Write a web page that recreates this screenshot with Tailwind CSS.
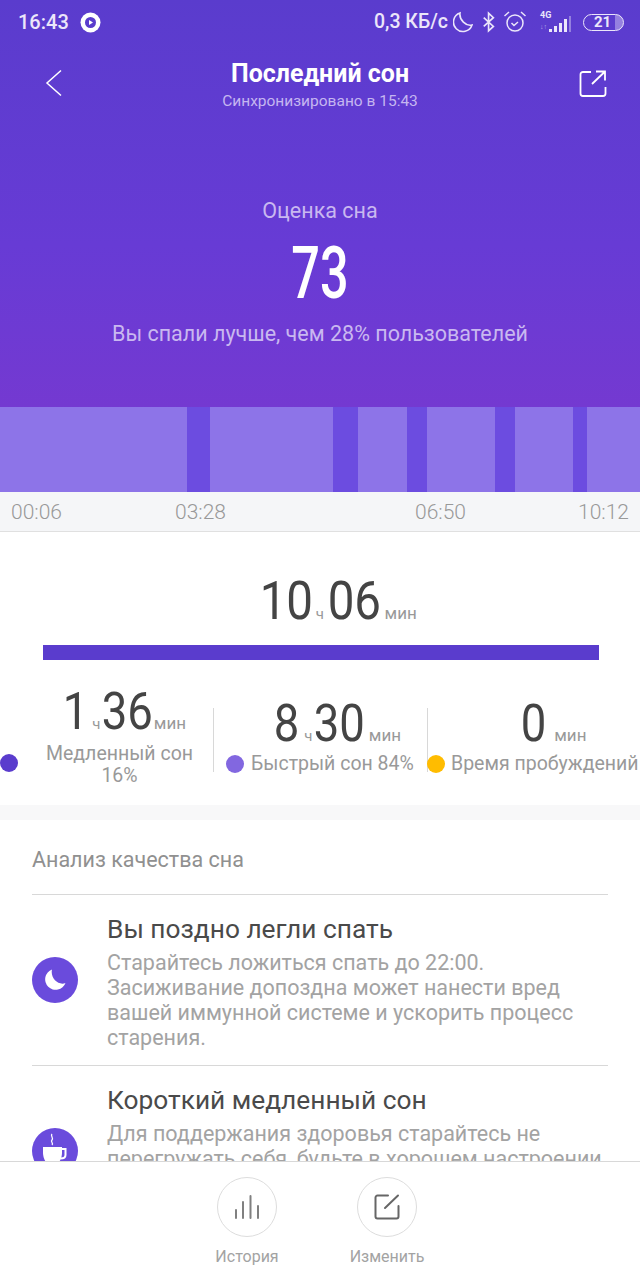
<!DOCTYPE html>
<html lang="ru">
<head>
    <meta charset="UTF-8">
    <meta name="viewport" content="width=device-width, initial-scale=1.0">
    <title>Последний сон</title>
    <script src="https://cdn.jsdelivr.net/npm/@tailwindcss/browser@4"></script>
</head>
<body class="bg-white font-['Roboto',sans-serif]">
<div class="w-[640px] h-[1280px] overflow-hidden flex flex-col">
    <div class="flex-1 min-h-0 overflow-hidden">
        <!-- header -->
        <div class="h-[407px] bg-gradient-to-b from-[#5a3ccd] via-[#673bd5] via-60% to-[#7439d1] flex flex-col text-white">
            <!-- status bar -->
            <div class="h-[44px] flex items-center pl-[18px] text-[#ebe6fa] font-medium shrink-0">
                <span class="text-[20px] w-[52px]">16:43</span>
                <svg class="ml-[10px]" width="21" height="21" viewBox="0 0 21 21"><circle cx="10.500" cy="10.500" r="10" fill="#fff"/><circle cx="10.500" cy="10.500" r="5.500" fill="#5a3ccd"/><path d="M9 8l4 2.500-4 2.500z" fill="#fff"/></svg>
                <span class="ml-[273px] text-[19.500px] w-[74px] whitespace-nowrap">0,3 КБ/с</span>
                <svg class="ml-[5px]" width="20" height="22" viewBox="0 0 20 22" fill="none" stroke="#ebe6fa" stroke-width="1.600"><path d="M7 2a9.500 9.500 0 1 0 12 12c-6 1.500-13-5-12-12z"/></svg>
                <svg class="ml-[9px]" width="14" height="24" viewBox="0 0 16 24" fill="none" stroke="#ebe6fa" stroke-width="1.900"><path d="M2 7l11 10-5.500 5V2l5.500 5L2 17"/></svg>
                <svg class="ml-[7px]" width="24" height="24" viewBox="0 0 24 24" fill="none" stroke="#ebe6fa" stroke-width="1.500"><circle cx="12" cy="13" r="8"/><path d="M8.500 13l2.500 2.500 4-3.500M1.500 6l4.500-4M22.500 6L18 2"/></svg>
                <div class="ml-[13px] w-[33px] h-[22px] relative">
                    <span class="absolute left-0 top-[-1px] text-[9px] font-bold leading-[10px]">4G</span>
                    <span class="absolute left-0 top-[12px] text-[7px] leading-[8px] text-[#ebe6fa]/60">↓↑</span>
                    <div class="absolute left-[9px] bottom-[1px] flex items-end gap-[2px]">
                        <div class="w-[3px] h-[3px] bg-[#ebe6fa]"></div>
                        <div class="w-[3px] h-[6px] bg-[#ebe6fa]"></div>
                        <div class="w-[3px] h-[9px] bg-[#ebe6fa]"></div>
                        <div class="w-[3px] h-[13px] bg-[#ebe6fa]"></div>
                        <div class="w-[2px] h-[16px] bg-[#ebe6fa]/40"></div>
                    </div>
                </div>
                <div class="ml-[10px] w-[41px] h-[17px] rounded-full border-[1.500px] border-[#ebe6fa] flex items-center justify-center text-[15px] font-bold leading-none pr-[2px] bg-gradient-to-r from-transparent from-[80%] to-[#ebe6fa]/40 to-[80%]">21</div>
            </div>
            <!-- nav -->
            <div class="h-[68px] relative shrink-0 flex flex-col items-center">
                <svg class="absolute left-[45px] top-[25px]" width="18" height="28" viewBox="0 0 18 28" fill="none" stroke="#fff" stroke-width="1.500"><path d="M16 1.500L2 14l14 12.500"/></svg>
                <div class="text-[25px] font-bold leading-[28px] mt-[16px]">Последний сон</div>
                <div class="text-[15.500px] leading-[18px] mt-[4px] text-[#c5b6f0]">Синхронизировано в 15:43</div>
                <svg class="absolute left-[579px] top-[25px]" width="28" height="28" viewBox="0 0 28 28" fill="none" stroke="#fff" stroke-width="1.800"><path d="M12 3H4a2.500 2.500 0 0 0-2.500 2.500v19A2.500 2.500 0 0 0 4 27h20a2.500 2.500 0 0 0 2.500-2.500V18M13 15L25.500 3M17 2.500h9v9"/></svg>
            </div>
            <!-- score -->
            <div class="flex flex-col items-center">
                <div class="mt-[87px] text-[21.500px] leading-[24px] text-[#c9b8f0]">Оценка сна</div>
                <div class="mt-[19px] h-[64px] text-[72px] leading-[64px] font-medium scale-x-[0.7]">73</div>
                <div class="mt-[16px] text-[21.500px] leading-[24px] text-[#c9b8f0]">Вы спали лучше, чем 28% пользователей</div>
            </div>
        </div>
        <!-- chart -->
        <div class="h-[85px] flex">
            <div class="w-[187px] bg-[#8d74e8]"></div>
            <div class="w-[23px] bg-[#6c4ce0]"></div>
            <div class="w-[123px] bg-[#8d74e8]"></div>
            <div class="w-[25px] bg-[#6c4ce0]"></div>
            <div class="w-[49px] bg-[#8d74e8]"></div>
            <div class="w-[20px] bg-[#6c4ce0]"></div>
            <div class="w-[68px] bg-[#8d74e8]"></div>
            <div class="w-[20px] bg-[#6c4ce0]"></div>
            <div class="w-[58px] bg-[#8d74e8]"></div>
            <div class="w-[14px] bg-[#6c4ce0]"></div>
            <div class="w-[53px] bg-[#8d74e8]"></div>
        </div>
        <!-- axis -->
        <div class="h-[40px] bg-[#f5f6f8] border-b border-[#e0e0e0] flex items-center text-[21px] font-light text-[#999] pt-[3px] whitespace-nowrap">
            <span class="ml-[11px] w-[51px]">00:06</span>
            <span class="ml-[113px] w-[51px]">03:28</span>
            <span class="ml-[189px] w-[51px]">06:50</span>
            <span class="ml-[112px] w-[52px]">10:12</span>
        </div>
        <!-- total -->
        <div class="h-[273px] relative">
            <div class="flex items-baseline pl-[259px] pt-[39px] text-[#444]">
                <span class="inline-block text-[54px] leading-[60px] scale-x-[0.88] -mx-[3.500px]">10</span>
                <span class="text-[15px] text-[#999] ml-[3px]">ч</span>
                <span class="inline-block text-[54px] leading-[60px] scale-x-[0.88] -mx-[3.500px] ml-[0.500px]">06</span>
                <span class="text-[17px] text-[#999] ml-[3px]">мин</span>
            </div>
            <div class="ml-[43px] w-[556px] mt-[14px] h-[15px] bg-[#5a3ccd]"></div>
            <!-- stats -->
            <div class="flex mt-[17px] h-[110px]">
                <div class="w-[213px] relative flex flex-col">
                    <div class="flex items-baseline text-[#444] pl-[63px] mt-[6px]">
                        <span class="inline-block text-[52px] leading-[58px] scale-x-[0.875] -mx-[2px]">1</span>
                        <span class="text-[15px] text-[#999] ml-[4px] mr-[1px]">ч</span>
                        <span class="inline-block text-[52px] leading-[58px] scale-x-[0.875] -mx-[3.500px]">36</span>
                        <span class="text-[17px] text-[#999] ml-[1px]">мин</span>
                    </div>
                    <div class="absolute left-0 top-[77px] w-[18px] h-[18px] rounded-full bg-[#5a3ccd]"></div>
                    <div class="pl-[26px] mt-[2px] text-[19.500px] leading-[22px] text-[#999] text-center">Медленный сон<br>16%</div>
                </div>
                <div class="w-px h-[64px] bg-[#d8d8d8] mt-[31px]"></div>
                <div class="w-[213px] flex flex-col">
                    <div class="flex items-baseline text-[#444] mt-[18px] pl-[60px]">
                        <span class="inline-block text-[52px] leading-[58px] scale-x-[0.875] -mx-[2px]">8</span>
                        <span class="text-[15px] text-[#999] ml-[5px] mr-[1px]">ч</span>
                        <span class="inline-block text-[52px] leading-[58px] scale-x-[0.875] -mx-[3.500px]">30</span>
                        <span class="text-[17px] text-[#999] ml-[4px]">мин</span>
                    </div>
                    <div class="flex items-center pl-[12px] whitespace-nowrap">
                        <div class="w-[18px] h-[18px] rounded-full bg-[#8267e0] mr-[7px]"></div>
                        <span class="text-[19.500px] leading-[22px] text-[#999]">Быстрый сон 84%</span>
                    </div>
                </div>
                <div class="w-px h-[64px] bg-[#d8d8d8] mt-[31px]"></div>
                <div class="flex-1 flex flex-col">
                    <div class="flex items-baseline text-[#444] mt-[18px] pl-[93px]">
                        <span class="inline-block text-[52px] leading-[58px] scale-x-[0.875] -mx-[2px]">0</span>
                        <span class="text-[17px] text-[#999] ml-[8px]">мин</span>
                    </div>
                    <div class="flex items-center whitespace-nowrap">
                        <div class="w-[18px] h-[18px] rounded-full bg-[#ffbc00] mr-[6px] -ml-[1px] shrink-0"></div>
                        <span class="text-[19.500px] leading-[22px] text-[#999]">Время пробуждений</span>
                    </div>
                </div>
            </div>
        </div>
        <div class="h-[15px] bg-[#f8f8f9]"></div>
        <!-- analysis -->
        <div class="px-[32px]">
            <div class="h-[75px] border-b border-[#d8d8d8] flex items-center text-[21.500px] text-[#909090] pt-[7px]">Анализ качества сна</div>
            <div class="flex border-b border-[#d8d8d8] h-[171px] items-start">
                <div class="w-[46px] h-[46px] rounded-full bg-[#6a4bdc] flex items-center justify-center mt-[62px] shrink-0">
                    <svg width="24" height="24" viewBox="0 0 24 24"><path d="M9 1.500a10.500 10.500 0 1 0 13.500 13.500c-7 3-15.500-5-13.500-13.500z" fill="#fff"/></svg>
                </div>
                <div class="ml-[29px] whitespace-nowrap">
                    <div class="text-[26.300px] leading-[30px] text-[#4a4a4a] mt-[19px]">Вы поздно легли спать</div>
                    <div class="text-[21.500px] leading-[25px] text-[#a3a3a3] mt-[6px]">Старайтесь ложиться спать до 22:00.<br>Засиживание допоздна может нанести вред<br>вашей иммунной системе и ускорить процесс<br>старения.</div>
                </div>
            </div>
            <div class="flex items-start">
                <div class="w-[46px] h-[46px] rounded-full bg-[#6a4bdc] flex items-center justify-center mt-[62px] shrink-0">
                    <svg width="28" height="36" viewBox="0 0 28 36" fill="none"><path d="M11 1c-2 2 2 4 0 6s2 3 0 5" stroke="#fff" stroke-width="1.300"/><path d="M20 16h4.500v6c0 2-2 3.500-5 3.500" stroke="#fff" stroke-width="2"/><path d="M2 14h19v6c0 5-3 11-6 11H8c-3 0-6-6-6-11z" fill="#fff"/></svg>
                </div>
                <div class="ml-[29px] whitespace-nowrap">
                    <div class="text-[26.300px] leading-[30px] text-[#4a4a4a] mt-[19px]">Короткий медленный сон</div>
                    <div class="text-[21.500px] leading-[25px] text-[#a3a3a3] mt-[6px]">Для поддержания здоровья старайтесь не<br>перегружать себя, будьте в хорошем настроении</div>
                </div>
            </div>
        </div>
    </div>
    <!-- bottom bar -->
    <div class="h-[119px] shrink-0 bg-white border-t border-[#d8d8d8] flex relative z-10">
        <div class="ml-[207px] w-[80px] flex flex-col items-center pt-[15px]">
            <div class="w-[60px] h-[60px] rounded-full border border-[#ddd] flex items-center justify-center">
                <svg width="26" height="24" viewBox="0 0 26 24" fill="none" stroke="#808080" stroke-width="2" stroke-linecap="round"><path d="M2 15v8M9 7v16M16.500 1v22M24 11v12"/></svg>
            </div>
            <div class="mt-[10px] text-[16px] leading-[20px] text-[#a3a3a3]">История</div>
        </div>
        <div class="ml-[60px] w-[80px] flex flex-col items-center pt-[15px]">
            <div class="w-[60px] h-[60px] rounded-full border border-[#ddd] flex items-center justify-center">
                <svg width="26" height="26" viewBox="0 0 26 26" fill="none" stroke="#666" stroke-width="2" stroke-linecap="round"><path d="M14 1.500H3.500a2 2 0 0 0-2 2v19a2 2 0 0 0 2 2h19a2 2 0 0 0 2-2V12M11 14L24 1.500"/></svg>
            </div>
            <div class="mt-[10px] text-[16px] leading-[20px] text-[#a3a3a3] whitespace-nowrap">Изменить</div>
        </div>
    </div>
</div>
</body>
</html>
